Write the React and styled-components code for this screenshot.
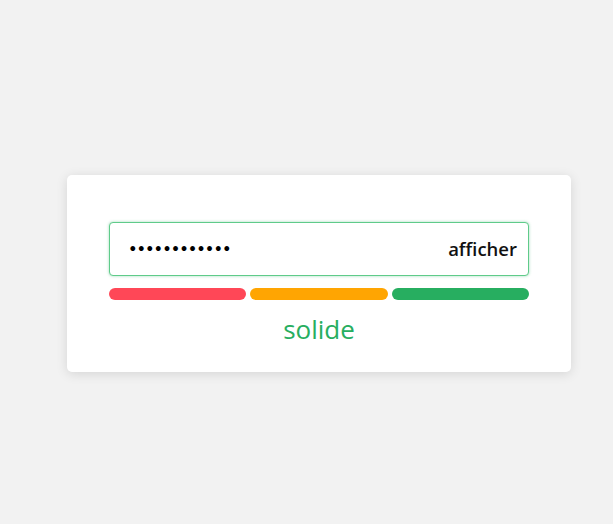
import React, { useState } from 'react'
import styled, { createGlobalStyle } from 'styled-components'

const GlobalStyle = createGlobalStyle`
  * { box-sizing: border-box; }
  body {
    margin: 0;
    background: #f2f2f2;
    font-family: "Open Sans", "Noto Sans", sans-serif;
  }
`

const Page = styled.main`
  min-height: 100vh;
  padding: 175px 0 0 67px;
`

const Card = styled.section`
  width: 504px;
  height: 197px;
  background: #fff;
  border-radius: 5px;
  box-shadow: 0 2px 12px rgba(0, 0, 0, 0.12);
  padding: 47px 42px 0;
  display: flex;
  flex-direction: column;
`

const Field = styled.div`
  position: relative;
  height: 54px;
`

const Input = styled.input`
  width: 100%;
  height: 100%;
  border: 1.5px solid #5fcb8a;
  border-radius: 4px;
  box-shadow: 0 0 3px rgba(39, 174, 96, 0.45);
  padding: 0 90px 2px 19px;
  font-family: Lato, sans-serif;
  font-size: 13px;
  letter-spacing: 1px;
  color: #000;
  outline: none;
`

const Toggle = styled.button`
  position: absolute;
  right: 12px;
  top: 50%;
  transform: translateY(-54%);
  background: none;
  border: 0;
  padding: 0;
  font-family: "Open Sans", sans-serif;
  font-weight: 600;
  font-size: 18.5px;
  color: #111;
  cursor: pointer;
`

const Meter = styled.div`
  display: grid;
  grid-template-columns: repeat(3, 1fr);
  gap: 4px;
  margin-top: 12px;
`

const Bar = styled.span`
  height: 12px;
  border-radius: 6px;
  background: ${p => p.color};
`

const Label = styled.p`
  margin: 13px 0 0;
  text-align: center;
  font-family: "Open Sans", sans-serif;
  font-size: 26px;
  line-height: 32px;
  color: #27ae60;
`

export default function App() {
  const [visible, setVisible] = useState(false)
  return (
    <>
      <GlobalStyle />
      <Page>
        <Card>
          <Field>
            <Input type={visible ? 'text' : 'password'} defaultValue="motdepasse12" />
            <Toggle onClick={() => setVisible(!visible)}>afficher</Toggle>
          </Field>
          <Meter>
            <Bar color="#ff4757" />
            <Bar color="#ffa502" />
            <Bar color="#27ae60" />
          </Meter>
          <Label>solide</Label>
        </Card>
      </Page>
    </>
  )
}
